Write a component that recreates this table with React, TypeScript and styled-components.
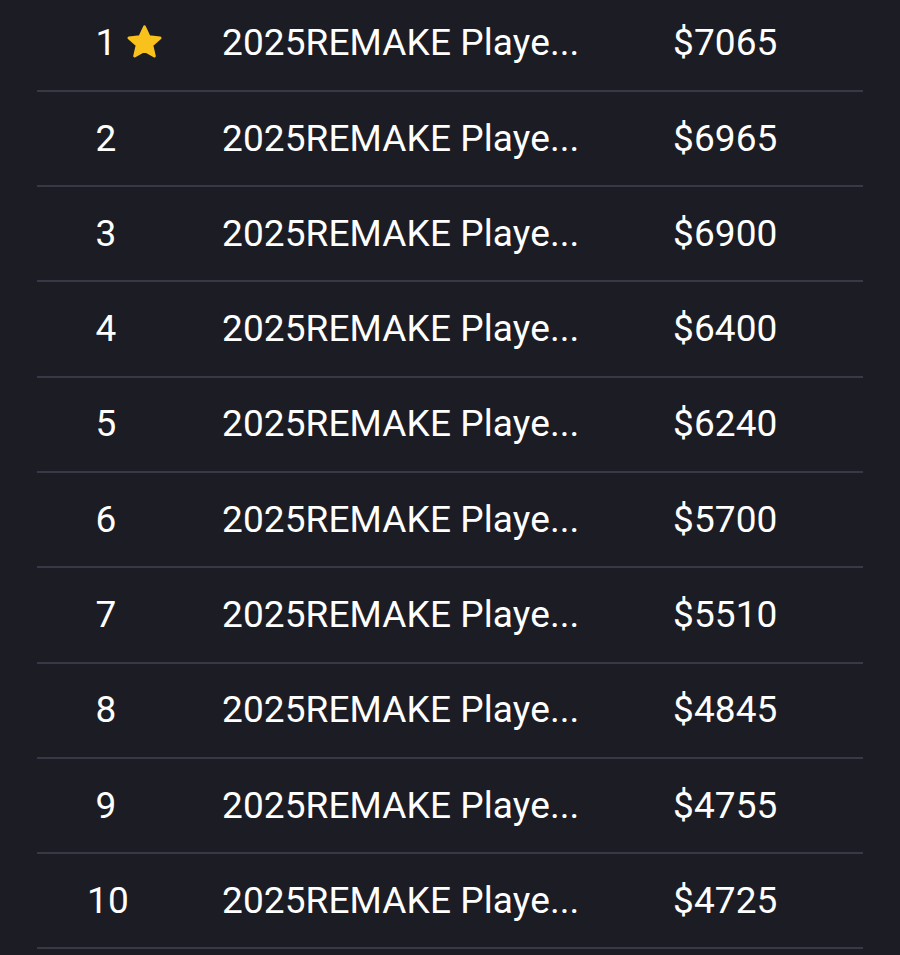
import styled, { createGlobalStyle } from "styled-components"

const GlobalStyle = createGlobalStyle`
  html, body {
    margin: 0;
    padding: 0;
    background: #1c1c24;
    overflow: hidden;
  }
  body {
    font-family: Roboto, "Noto Sans", sans-serif;
    color: #ffffff;
  }
`

const ROW_HEIGHT = 95.33

const prices = [7065, 6965, 6900, 6400, 6240, 5700, 5510, 4845, 4755, 4725]

const Page = styled.div`
  width: 900px;
  height: 955px;
  overflow: hidden;
  background: #1c1c24;
`

const List = styled.ul`
  list-style: none;
  margin: -3.8px 37px 0;
  padding: 0;
`

const Row = styled.li`
  display: grid;
  grid-template-columns: 185px 451px 1fr;
  align-items: center;
  height: ${ROW_HEIGHT}px;
  box-sizing: border-box;
  padding-top: 1px;
  border-bottom: 2px solid #383847;
  font-size: 37px;
  line-height: 1.2;
  letter-spacing: 0.1px;
`

const Rank = styled.div`
  display: flex;
  align-items: center;
  padding-left: 50px;
`

const RankNum = styled.span`
  width: 38px;
  text-align: center;
`

const Star = styled.svg`
  width: 43px;
  height: 43px;
  margin-left: -2px;
  margin-top: -2px;
  flex: none;
`

const Name = styled.div`
  white-space: nowrap;
`

const Price = styled.div`
  white-space: nowrap;
`

const StarIcon = () => (
  <Star viewBox="0 0 24 24">
    <path
      d="M12 3.2l2.6 5.6 6.1.6-4.6 4.1 1.4 6.1L12 16.5l-5.5 3.1 1.4-6.1-4.6-4.1 6.1-.6z"
      fill="#f9c11b"
      stroke="#f9c11b"
      strokeWidth="1.6"
      strokeLinejoin="round"
    />
  </Star>
)

export default function App() {
  return (
    <Page>
      <GlobalStyle />
      <List>
        {prices.map((price, i) => (
          <Row key={i}>
            <Rank>
              <RankNum>{i + 1}</RankNum>
              {i === 0 && <StarIcon />}
            </Rank>
            <Name>2025REMAKE Playe...</Name>
            <Price>${price}</Price>
          </Row>
        ))}
      </List>
    </Page>
  )
}
